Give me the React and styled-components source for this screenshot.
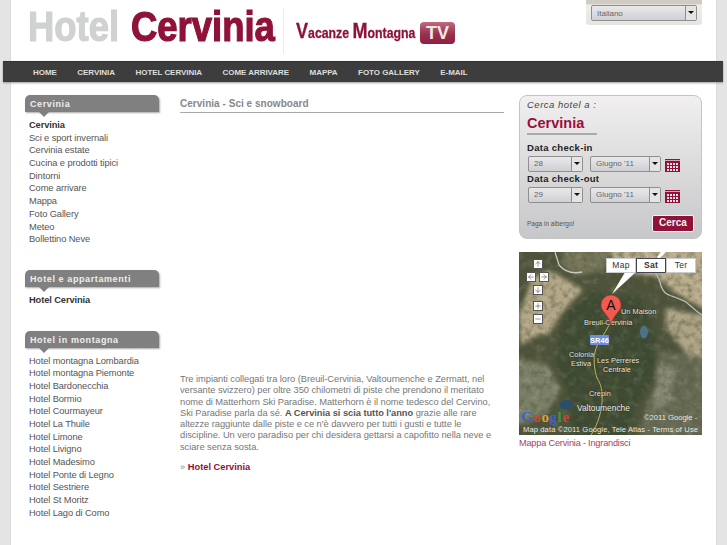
import React from 'react';
import styled, {createGlobalStyle} from 'styled-components';
import {ArrowUp, ArrowDown, ArrowLeft, ArrowRight, Plus, Minus} from 'lucide-react';

const menu = ['Home', 'Cervinia', 'Hotel Cervinia', 'Come arrivare', 'Mappa', 'Foto Gallery', 'E-mail'];
const cervinia = ['Sci e sport invernali', 'Cervinia estate', 'Cucina e prodotti tipici', 'Dintorni', 'Come arrivare', 'Mappa', 'Foto Gallery', 'Meteo', 'Bollettino Neve'];
const montagna = ['Hotel montagna Lombardia', 'Hotel montagna Piemonte', 'Hotel Bardonecchia', 'Hotel Bormio', 'Hotel Courmayeur', 'Hotel La Thuile', 'Hotel Limone', 'Hotel Livigno', 'Hotel Madesimo', 'Hotel Ponte di Legno', 'Hotel Sestriere', 'Hotel St Moritz', 'Hotel Lago di Como'];

const Calendar = () => (
    <svg width="15" height="13" viewBox="0 0 15 13">
        <rect width="15" height="13" fill="#8f1238"/>
        <rect x="0" y="1" width="15" height="1" fill="#d9a3b3"/>
        {[4, 7, 10].map(y => [2, 5, 8, 11].map(x => (
            <rect key={x + '-' + y} x={x} y={y} width="2" height="2" fill="#f3dfe5"/>
        )))}
    </svg>
);

const MapLabels = () => (
    <g fontFamily="Liberation Sans" fontSize="7.4" fill="#e6e6dc" stroke="#23281a" strokeWidth="1.2" strokeOpacity="0.55" paintOrder="stroke">
        <text x="102" y="62">Un Maison</text>
        <text x="65" y="73">Breuil-Cervinia</text>
        <text x="50" y="105">Colonia</text>
        <text x="52" y="113.5">Estiva</text>
        <text x="78" y="111">Les Perrères</text>
        <text x="84" y="119.5">Centrale</text>
        <text x="70" y="144">Crepin</text>
        <text x="58" y="158.5" fontSize="8.4" fill="#f2f2ec">Valtoumenche</text>
    </g>
);

const MapDrawing = () => (
    <svg width="183" height="183" viewBox="0 0 183 183">
        <defs>
            <filter id="soft" x="-5%" y="-5%" width="110%" height="110%">
                <feGaussianBlur stdDeviation="2.2"/>
            </filter>
            <filter id="rock" x="0" y="0" width="100%" height="100%">
                <feTurbulence type="fractalNoise" baseFrequency="0.16" numOctaves="4" seed="7"/>
                <feColorMatrix values="0 0 0 0 0.08  0 0 0 0 0.1  0 0 0 0 0.04  1.8 0 0 0 -0.72"/>
            </filter>
            <filter id="light" x="0" y="0" width="100%" height="100%">
                <feTurbulence type="fractalNoise" baseFrequency="0.12" numOctaves="3" seed="11"/>
                <feColorMatrix values="0 0 0 0 0.85  0 0 0 0 0.84  0 0 0 0 0.72  1.6 0 0 0 -0.8"/>
            </filter>
        </defs>
        <rect width="183" height="183" fill="#4d523a"/>
        <g filter="url(#soft)">
            <path d="M-5 -5 H45 L42 14 L60 24 L84 18 L100 -5 Z" fill="#77765a"/>
            <path d="M92 -5 H190 V60 L168 48 L150 36 L136 24 L112 22 L96 14 Z" fill="#bcae8f"/>
            <path d="M12 26 L30 18 L52 30 L64 38 L52 50 L42 62 L30 82 L12 86 L2 94 L0 62 L8 42 Z" fill="#b5a889"/>
            <path d="M146 56 L190 64 V112 L172 108 L158 90 L146 74 Z" fill="#aea385"/>
            <path d="M-5 106 L28 112 L42 138 L28 160 L8 172 H-5 Z" fill="#7d8067"/>
            <path d="M138 98 L190 106 V190 H118 L128 150 L142 124 Z" fill="#686b54"/>
            <path d="M46 60 L70 40 L120 46 L138 82 L134 126 L114 160 L108 190 H50 L52 150 L36 106 Z" fill="#3e4830"/>
            <path d="M140 110 L156 116 L150 150 L134 160 Z" fill="#878875"/>
        </g>
        <rect width="183" height="183" filter="url(#light)" opacity="0.25"/>
        <rect width="183" height="183" filter="url(#rock)" opacity="0.65"/>
        <path d="M36 0 L40 13 C46 20 54 22 63 20" fill="none" stroke="#c9c9c2" strokeWidth="1.3"/>
        <path d="M127 0 C130 12 136 20 140 27 C142 36 146 42 150 43 C158 46 164 48 167 50 C173 55 178 60 183 63" fill="none" stroke="#b9bab4" strokeWidth="1.3"/>
        <path d="M90 73 C86 82 78 90 76 100 C74 110 76 120 78 126 C82 132 84 140 83 150 C82 160 80 170 72 183" fill="none" stroke="#bdb65c" strokeWidth="1"/>
        <ellipse cx="125" cy="80" rx="4" ry="6.5" fill="#4d7287"/>
        <ellipse cx="47" cy="153" rx="7" ry="5" fill="#2a4f68"/>
        <MapLabels/>
        <path d="M93 42 L108 17 L117 20 Z M138 5 L142 0 H147 L140 7 Z" fill="#fff"/>
        <rect x="71" y="83" width="19" height="10" rx="1" fill="#6e8fd8"/>
        <text x="80.5" y="91" textAnchor="middle" fontSize="7.5" fontWeight="bold" fill="#fff" fontFamily="Liberation Sans">SR46</text>
        <path d="M92 73 C90 62 82 60 82 53 A10 10 0 1 1 102 53 C102 60 94 62 92 73 Z" fill="#f25a50" stroke="#a8352c" strokeWidth="0.5"/>
        <text x="92" y="58" textAnchor="middle" fontSize="14" fill="#111" fontFamily="Liberation Sans">A</text>
        <text x="2" y="170" fontSize="15" letterSpacing="0.6" fontFamily="Liberation Serif" fontWeight="bold">
            <tspan fill="#3b62c9">G</tspan><tspan fill="#c9443a">o</tspan><tspan fill="#d6a52f">o</tspan><tspan fill="#3b62c9">g</tspan><tspan fill="#3c9a47">l</tspan><tspan fill="#c9443a">e</tspan>
        </text>
        <text x="125" y="168" fontSize="7.6" fill="#e8e8e2" fontFamily="Liberation Sans">©2011 Google -</text>
        <text x="4" y="180" fontSize="7.6" fill="#e8e8e2" fontFamily="Liberation Sans" textLength="175">Map data ©2011 Google, Tele Atlas - Terms of Use</text>
    </svg>
);

export default function App() {
    return (
        <Page>
            <GlobalStyle/>
            <Header>
                <Logo>
                    <LogoWord $grey>Hotel</LogoWord>
                    <LogoWord>Cervinia</LogoWord>
                </Logo>
                <Divider/>
                <Tagline><b>V</b>acanze <b>M</b>ontagna</Tagline>
                <TvBadge>TV</TvBadge>
                <LangBox>
                    <FakeSelect $width={106}><span>Italiano</span><Arrow/></FakeSelect>
                </LangBox>
            </Header>
            <Nav>
                {menu.map(item => <NavItem key={item}>{item}</NavItem>)}
            </Nav>
            <Columns>
                <Sidebar>
                    <Group>
                        <GroupTitle>Cervinia</GroupTitle>
                        <SideLink $active>Cervinia</SideLink>
                        {cervinia.map(item => <SideLink key={item}>{item}</SideLink>)}
                    </Group>
                    <Group>
                        <GroupTitle>Hotel e appartamenti</GroupTitle>
                        <SideLink $active>Hotel Cervinia</SideLink>
                    </Group>
                    <Group>
                        <GroupTitle>Hotel in montagna</GroupTitle>
                        {montagna.map(item => <SideLink key={item}>{item}</SideLink>)}
                    </Group>
                </Sidebar>
                <Main>
                    <PageTitle>Cervinia - Sci e snowboard</PageTitle>
                    <Spacer/>
                    <Paragraph>
                        Tre impianti collegati tra loro (Breuil-Cervinia, Valtournenche e Zermatt, nel<br/>
                        versante svizzero) per oltre 350 chilometri di piste che prendono il meritato<br/>
                        nome di Matterhorn Ski Paradise. Matterhorn è il nome tedesco del Cervino,<br/>
                        Ski Paradise parla da sé. <strong>A Cervinia si scia tutto l'anno</strong> grazie alle rare<br/>
                        altezze raggiunte dalle piste e ce n'è davvero per tutti i gusti e tutte le<br/>
                        discipline. Un vero paradiso per chi desidera gettarsi a capofitto nella neve e<br/>
                        sciare senza sosta.
                    </Paragraph>
                    <MoreLine>» <strong>Hotel Cervinia</strong></MoreLine>
                </Main>
                <Aside>
                    <SearchPanel>
                        <SearchLabel>Cerca hotel a :</SearchLabel>
                        <SearchCity>Cervinia</SearchCity>
                        <FieldLabel>Data check-in</FieldLabel>
                        <DateRow>
                            <FakeSelect $width={55}><span>28</span><Arrow/></FakeSelect>
                            <FakeSelect $width={71}><span>Giugno '11</span><Arrow/></FakeSelect>
                            <Calendar/>
                        </DateRow>
                        <FieldLabel>Data check-out</FieldLabel>
                        <DateRow>
                            <FakeSelect $width={55}><span>29</span><Arrow/></FakeSelect>
                            <FakeSelect $width={71}><span>Giugno '11</span><Arrow/></FakeSelect>
                            <Calendar/>
                        </DateRow>
                        <SearchFooter>
                            <PayNote>Paga in albergo!</PayNote>
                            <SearchButton>Cerca</SearchButton>
                        </SearchFooter>
                    </SearchPanel>
                    <MapBox>
                        <MapDrawing/>
                        <PanControls>
                            <PanRow><PanKey><ArrowUp size={8} strokeWidth={1.5}/></PanKey></PanRow>
                            <PanRow>
                                <PanKey><ArrowLeft size={8} strokeWidth={1.5}/></PanKey>
                                <PanKey><ArrowRight size={8} strokeWidth={1.5}/></PanKey>
                            </PanRow>
                            <PanRow><PanKey><ArrowDown size={8} strokeWidth={1.5}/></PanKey></PanRow>
                            <ZoomKeys>
                                <PanKey><Plus size={8} strokeWidth={1.5}/></PanKey>
                                <PanKey><Minus size={8} strokeWidth={1.5}/></PanKey>
                            </ZoomKeys>
                        </PanControls>
                        <MapTypes>
                            <MapType>Map</MapType>
                            <MapType $active>Sat</MapType>
                            <MapType>Ter</MapType>
                        </MapTypes>
                    </MapBox>
                    <MapLink>Mappa Cervinia - Ingrandisci</MapLink>
                </Aside>
            </Columns>
        </Page>
    );
}

const GlobalStyle = createGlobalStyle`
  html, body {
    margin: 0;
    background: #e4e4e4;
    overflow: hidden;
  }

  * {
    box-sizing: border-box;
  }
`;

const Page = styled.div`
  width: 705px;
  height: 545px;
  margin-left: 11px;
  background: #fff;
  font-family: 'Liberation Sans', Arial, sans-serif;
  box-shadow: -1px 0 0 #dcdcdc, 1px 0 0 #dcdcdc;
`;

const Header = styled.div`
  position: relative;
  height: 61px;
  display: flex;
  align-items: flex-start;
  padding-left: 17px;
`;

const Logo = styled.div`
  display: flex;
  gap: 13px;
  width: 255px;
  padding-top: 4px;
`;

const LogoWord = styled.span`
  display: inline-block;
  width: ${p => p.$grey ? '90px' : '144px'};
  font-weight: 700;
  font-size: 42px;
  line-height: 46px;
  color: ${p => p.$grey ? '#d0d2d2' : '#8f1238'};
  -webkit-text-stroke: 1.2px ${p => p.$grey ? '#d0d2d2' : '#8f1238'};
  transform-origin: left center;
  transform: scaleX(0.868);
  white-space: nowrap;
`;

const Divider = styled.div`
  width: 1px;
  height: 46px;
  margin-top: 8px;
  background: #ececec;
`;

const Tagline = styled.div`
  width: 124px;
  margin: 20px 0 0 12px;
  font-weight: 700;
  font-size: 15px;
  line-height: 22px;
  color: #8f1238;
  -webkit-text-stroke: 0.3px #8f1238;
  white-space: nowrap;
  transform-origin: left center;
  transform: scaleX(0.82);

  b {
    font-size: 22px;
  }
`;

const TvBadge = styled.div`
  width: 35px;
  height: 22px;
  margin-top: 22px;
  border-radius: 4px;
  background: linear-gradient(#c06a80, #98314f 55%, #8f1f42);
  color: #f0e6e6;
  font-weight: 700;
  font-size: 18px;
  line-height: 22px;
  text-align: center;
`;

const LangBox = styled.div`
  position: absolute;
  top: 0;
  left: 575px;
  width: 116px;
  height: 25px;
  padding: 5px;
  border-radius: 0 0 3px 3px;
  background: linear-gradient(#d0ccc3 0, #d0ccc3 4px, #eeeeea 5px, #e6e4e0);
`;

const FakeSelect = styled.div`
  width: ${p => p.$width}px;
  height: 16px;
  display: flex;
  align-items: center;
  justify-content: space-between;
  padding-left: 5px;
  border: 1px solid #8f8f8f;
  border-radius: 2px;
  background: linear-gradient(#e9e9ec, #cfd0d4);
  font-size: 8px;
  color: #666;
`;

const Arrow = styled.i`
  width: 11px;
  height: 14px;
  flex: none;
  border-left: 1px solid #8f8f8f;
  background: #e4e4e4;
  position: relative;

  &::after {
    content: '';
    position: absolute;
    left: 2px;
    top: 5px;
    border: 3px solid transparent;
    border-top: 3px solid #111;
    border-bottom: 0;
  }
`;

const Nav = styled.div`
  margin: 0 -7px 0 -8px;
  height: 21px;
  padding-left: 30px;
  display: flex;
  align-items: center;
  background: #3d3d3d;
  border-top: 1px solid #333;
  box-shadow: 0 1px 2px #999;
`;

const NavItem = styled.span`
  margin-right: 20.5px;
  font-size: 8px;
  font-weight: 700;
  letter-spacing: -0.05px;
  color: #ddd;
  text-transform: uppercase;
`;

const Columns = styled.div`
  display: grid;
  grid-template-columns: 134px 324px 183px;
  justify-content: start;
  padding: 13px 0 0 14px;
`;

const Sidebar = styled.div`
  display: flex;
  flex-direction: column;
  gap: 24px;
`;

const Group = styled.div`
  display: flex;
  flex-direction: column;
`;

const GroupTitle = styled.div`
  position: relative;
  height: 17px;
  margin-bottom: 7px;
  padding: 1px 0 0 5px;
  border-radius: 5px 5px 0 0;
  background: #808080;
  box-shadow: 1px 1px 2px #aaa;
  color: #eee;
  font-size: 9px;
  font-weight: 700;
  letter-spacing: 0.6px;
  line-height: 16px;

  &::after {
    content: '';
    position: absolute;
    left: 14px;
    top: 17px;
    border: 5px solid transparent;
    border-top: 5px solid #808080;
    border-bottom: 0;
  }
`;

const SideLink = styled.div`
  height: 12.7px;
  padding-left: 4px;
  font-size: 9.3px;
  line-height: 12.7px;
  letter-spacing: -0.1px;
  font-weight: ${p => p.$active ? 700 : 400};
  color: ${p => p.$active ? '#333' : '#555'};
  white-space: nowrap;
`;

const Main = styled.div`
  width: 324px;
  margin-left: 21px;
  display: flex;
  flex-direction: column;
`;

const PageTitle = styled.div`
  height: 18px;
  border-bottom: 1px solid #aaa;
  color: #888;
  font-size: 10px;
  font-weight: 700;
  letter-spacing: 0.03px;
  line-height: 18px;
`;

const Spacer = styled.div`
  height: 261px;
`;

const Paragraph = styled.p`
  margin: 0;
  font-size: 9.3px;
  line-height: 11.3px;
  letter-spacing: -0.04px;
  color: #777;
  white-space: nowrap;

  strong {
    color: #555;
  }
`;

const MoreLine = styled.div`
  margin-top: 9px;
  font-size: 9.3px;
  line-height: 11px;
  color: #888;

  strong {
    color: #8f1238;
  }
`;

const Aside = styled.div`
  width: 183px;
  margin-left: 36px;
  display: flex;
  flex-direction: column;
`;

const SearchPanel = styled.div`
  height: 144px;
  padding: 3px 7px;
  border: 1px solid #c4c4c4;
  border-radius: 8px;
  background: linear-gradient(#f1efef, #c6c7c9);
  display: flex;
  flex-direction: column;
`;

const SearchLabel = styled.div`
  font-size: 9.5px;
  font-style: italic;
  letter-spacing: 0.5px;
  line-height: 12px;
  color: #444;
`;

const SearchCity = styled.div`
  width: 70px;
  height: 21px;
  margin-top: 3px;
  margin-bottom: 6px;
  border-bottom: 2px solid #aaa;
  color: #9c0e3c;
  font-size: 14.5px;
  font-weight: 700;
  line-height: 19px;
`;

const FieldLabel = styled.div`
  font-size: 9.5px;
  font-weight: 700;
  letter-spacing: 0.3px;
  line-height: 14px;
  color: #222;
`;

const DateRow = styled.div`
  height: 17px;
  margin-left: 1px;
  display: flex;
  align-items: center;
  gap: 7px;

  svg {
    margin: 3px 0 0 -3px;
  }
`;

const SearchFooter = styled.div`
  margin-top: auto;
  margin-bottom: 3px;
  display: flex;
  align-items: center;
  justify-content: space-between;
`;

const PayNote = styled.div`
  font-size: 6.5px;
  color: #555;
`;

const SearchButton = styled.div`
  width: 42px;
  height: 17px;
  padding-left: 6px;
  border: 1px solid #f4f4f4;
  border-radius: 2px;
  background: #8f1238;
  color: #f2f2f2;
  font-size: 10px;
  font-weight: 700;
  line-height: 14px;
`;

const MapBox = styled.div`
  position: relative;
  width: 183px;
  height: 183px;
  margin-top: 13px;
  overflow: hidden;

  svg {
    display: block;
  }
`;

const PanControls = styled.div`
  position: absolute;
  left: 7px;
  top: 7px;
  width: 23px;
  display: flex;
  flex-direction: column;
  align-items: center;
  gap: 3px;
`;

const PanRow = styled.div`
  display: flex;
  gap: 3px;
`;

const ZoomKeys = styled.div`
  margin-top: 3px;
  display: flex;
  flex-direction: column;
  gap: 3px;
`;

const PanKey = styled.div`
  width: 10px;
  height: 10px;
  display: flex;
  align-items: center;
  justify-content: center;
  background: #fff;
  border: 1px solid #555;
  color: #333;
`;

const MapTypes = styled.div`
  position: absolute;
  left: 87px;
  top: 6px;
  display: flex;
`;

const MapType = styled.div`
  width: 30px;
  height: 15px;
  background: #fff;
  border: 1px solid ${p => p.$active ? '#445' : '#ccc'};
  font-size: 8.5px;
  font-weight: ${p => p.$active ? 700 : 400};
  line-height: 13px;
  letter-spacing: 0.3px;
  text-align: center;
  color: #333;
`;

const MapLink = styled.div`
  margin-top: 3px;
  font-size: 9.2px;
  letter-spacing: -0.2px;
  color: #a8405f;
`;
